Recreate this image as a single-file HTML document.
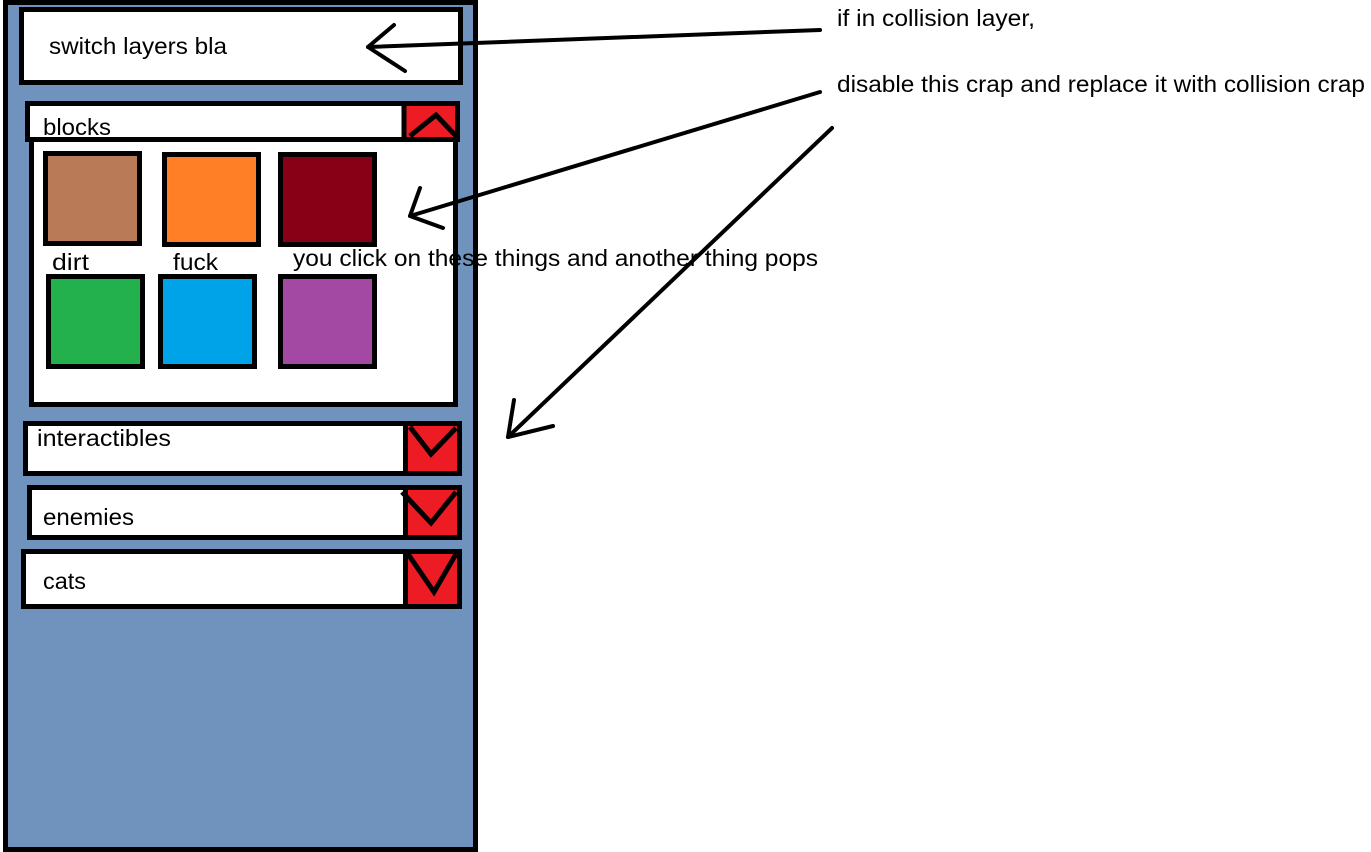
<!DOCTYPE html>
<html><head><meta charset="utf-8"><style>
html,body{margin:0;padding:0;background:#fff;width:1371px;height:852px;overflow:hidden}
svg{display:block}
text{font-family:"Liberation Sans",sans-serif;font-size:23px;fill:#000}
</style></head><body>
<svg width="1371" height="852" viewBox="0 0 1371 852" xmlns="http://www.w3.org/2000/svg">
<rect x="5.5" y="2.5" width="470" height="847" fill="#7093be" stroke="#000" stroke-width="5"/>
<rect x="21.5" y="9.5" width="439" height="73" fill="#fff" stroke="#000" stroke-width="5"/>
<text x="49" y="54" textLength="178" lengthAdjust="spacingAndGlyphs">switch layers bla</text>
<rect x="27.5" y="103.5" width="430" height="36" fill="#fff" stroke="#000" stroke-width="5"/>
<rect x="406" y="106" width="49" height="31" fill="#ed1c24"/>
<line x1="404" y1="104" x2="404" y2="139" stroke="#000" stroke-width="5"/>
<text x="43" y="135" textLength="68" lengthAdjust="spacingAndGlyphs">blocks</text>
<rect x="31.5" y="139.5" width="424" height="265" fill="#fff" stroke="#000" stroke-width="5"/>
<polyline points="410,136 436,115 456,136" fill="none" stroke="#000" stroke-width="5"/>
<g stroke="#000" stroke-width="5">
<rect x="45.5" y="153.5" width="94" height="90" fill="#b97a57"/>
<rect x="164.5" y="154.5" width="94" height="90" fill="#ff7f27"/>
<rect x="280.5" y="154.5" width="94" height="90" fill="#880015"/>
<rect x="48.5" y="276.5" width="94" height="90" fill="#22b14c"/>
<rect x="160.5" y="276.5" width="94" height="90" fill="#00a2e8"/>
<rect x="280.5" y="276.5" width="94" height="90" fill="#a349a4"/>
</g>
<text x="52" y="270" textLength="37" lengthAdjust="spacingAndGlyphs">dirt</text>
<text x="173" y="270" textLength="45" lengthAdjust="spacingAndGlyphs">fuck</text>
<text x="293" y="266" textLength="525" lengthAdjust="spacingAndGlyphs">you click on these things and another thing pops</text>
<rect x="25.5" y="423.5" width="434" height="50" fill="#fff" stroke="#000" stroke-width="5"/>
<rect x="408" y="426" width="49" height="45" fill="#ed1c24"/>
<line x1="405.5" y1="423" x2="405.5" y2="474" stroke="#000" stroke-width="5"/>
<polyline points="410,427 431,454 456,428" fill="none" stroke="#000" stroke-width="5"/>
<text x="37" y="446" textLength="134" lengthAdjust="spacingAndGlyphs">interactibles</text>
<rect x="29.5" y="487.5" width="430" height="50" fill="#fff" stroke="#000" stroke-width="5"/>
<rect x="408" y="490" width="49" height="45" fill="#ed1c24"/>
<line x1="405.5" y1="487" x2="405.5" y2="538" stroke="#000" stroke-width="5"/>
<polyline points="402,492 431,523 456,492" fill="none" stroke="#000" stroke-width="5"/>
<text x="43" y="525" textLength="91" lengthAdjust="spacingAndGlyphs">enemies</text>
<rect x="23.5" y="551.5" width="436" height="55" fill="#fff" stroke="#000" stroke-width="5"/>
<rect x="408" y="554" width="49" height="50" fill="#ed1c24"/>
<line x1="405.5" y1="551" x2="405.5" y2="607" stroke="#000" stroke-width="5"/>
<polyline points="408,554 434,592 456,554" fill="none" stroke="#000" stroke-width="5"/>
<text x="43" y="589" textLength="43" lengthAdjust="spacingAndGlyphs">cats</text>
<text x="837" y="26" textLength="198" lengthAdjust="spacingAndGlyphs">if in collision layer,</text>
<text x="837" y="92" textLength="528" lengthAdjust="spacingAndGlyphs">disable this crap and replace it with collision crap</text>
<g fill="none" stroke="#000" stroke-width="4" stroke-linecap="round" stroke-linejoin="round">
<line x1="820" y1="30" x2="368" y2="47"/>
<polyline points="394,25 368,47 405,71"/>
<line x1="820" y1="92" x2="410" y2="216"/>
<polyline points="420,188 410,216 443,228"/>
<line x1="832" y1="128" x2="508" y2="437"/>
<polyline points="514,400 508,437 553,426"/>
</g>
</svg>
</body></html>
